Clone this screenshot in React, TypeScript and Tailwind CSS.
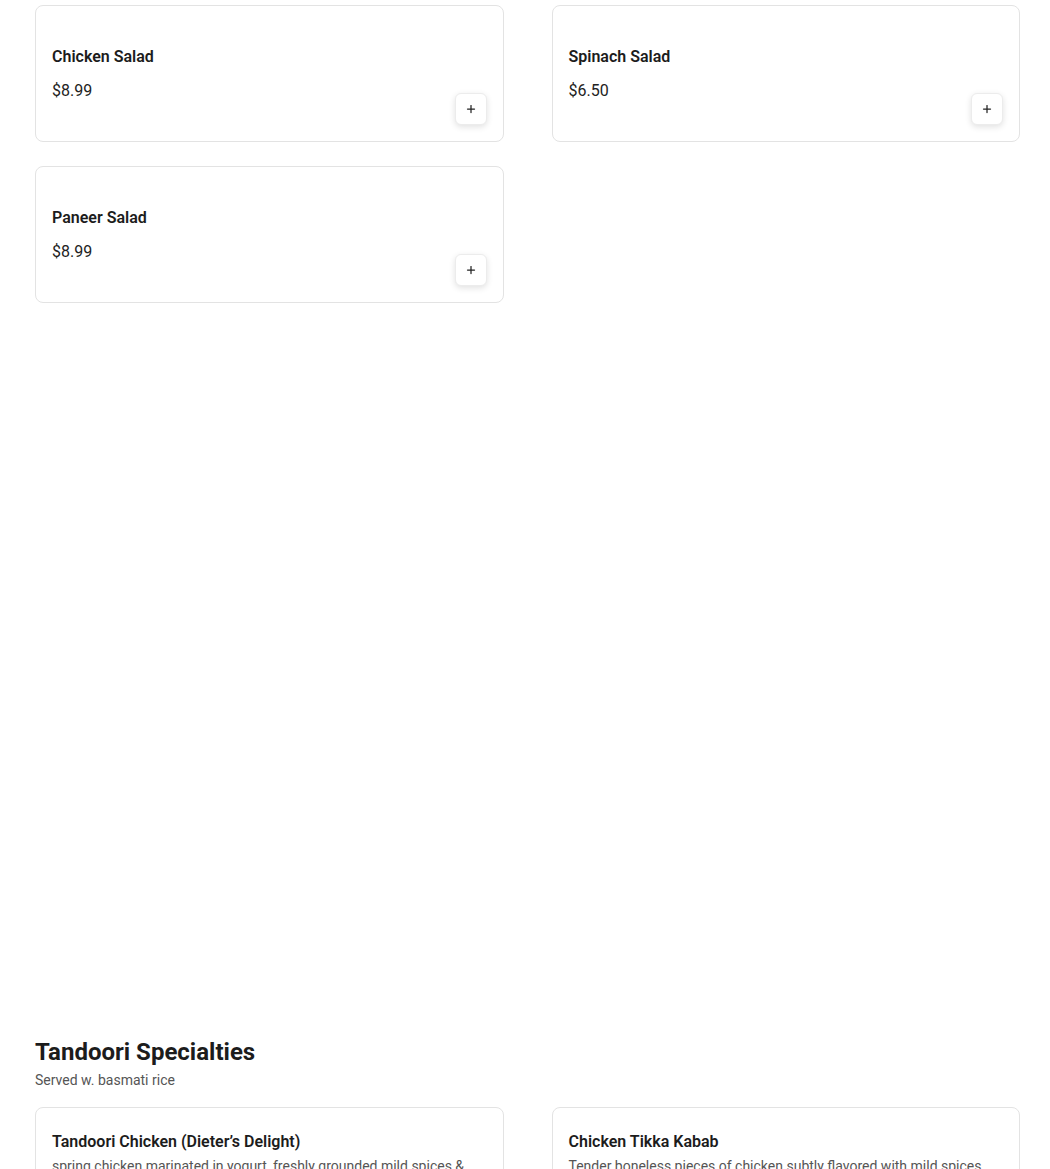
import { Plus } from "lucide-react";

type Item = { name: string; price?: string; description?: string };

const salads: Item[] = [
  { name: "Chicken Salad", price: "$8.99" },
  { name: "Spinach Salad", price: "$6.50" },
  { name: "Paneer Salad", price: "$8.99" },
];

const tandoori: Item[] = [
  {
    name: "Tandoori Chicken (Dieter’s Delight)",
    description:
      "spring chicken marinated in yogurt, freshly grounded mild spices & herbs, then roasted in tandoor",
    price: "$14.99",
  },
  {
    name: "Chicken Tikka Kabab",
    description:
      "Tender boneless pieces of chicken subtly flavored with mild spices and roasted in tandoor",
    price: "$15.99",
  },
];

function AddButton() {
  return (
    <button className="flex h-8 w-8 items-center justify-center rounded-md border border-[#ececec] bg-white text-[#222] shadow-[0_2px_6px_rgba(0,0,0,0.12)]">
      <Plus size={12} strokeWidth={2.5} />
    </button>
  );
}

function SaladCard({ item }: { item: Item }) {
  return (
    <div className="flex flex-col rounded-lg border border-[#e3e3e3] bg-white pb-4 pl-4 pr-[16px] pt-[39px]">
      <h3 className="text-base font-semibold leading-6 text-[#1c1c1c]">{item.name}</h3>
      <p className="mt-[10px] text-base leading-6 text-[#222]">{item.price}</p>
      <div className="-mt-[10px] flex justify-end">
        <AddButton />
      </div>
    </div>
  );
}

function DishCard({ item }: { item: Item }) {
  return (
    <div className="flex flex-col rounded-lg border border-[#e3e3e3] bg-white pb-4 pl-4 pr-[16px] pt-[22px]">
      <h3 className="text-base font-semibold leading-6 text-[#1c1c1c]">{item.name}</h3>
      <p className="mt-[2px] text-sm leading-5 text-[#555]">{item.description}</p>
      <p className="mt-[10px] text-base leading-6 text-[#222]">{item.price}</p>
      <div className="-mt-[10px] flex justify-end">
        <AddButton />
      </div>
    </div>
  );
}

export default function App() {
  return (
    <div className="min-h-[1169px] bg-white px-[35px] pt-[5px] font-['Roboto',sans-serif] text-[#1c1c1c]">
      <div className="w-[985px]">
        <div className="grid grid-cols-2 gap-x-[48px] gap-y-[24px]">
          {salads.map((s) => (
            <SaladCard key={s.name} item={s} />
          ))}
        </div>

        <section className="mt-[733px]">
          <h2 className="text-2xl font-bold leading-8 text-[#1c1c1c]">Tandoori Specialties</h2>
          <p className="mt-[2px] text-sm leading-5 text-[#555]">Served w. basmati rice</p>
          <div className="mt-[17px] grid grid-cols-2 gap-x-[48px] gap-y-[24px]">
            {tandoori.map((t) => (
              <DishCard key={t.name} item={t} />
            ))}
          </div>
        </section>
      </div>
    </div>
  );
}
